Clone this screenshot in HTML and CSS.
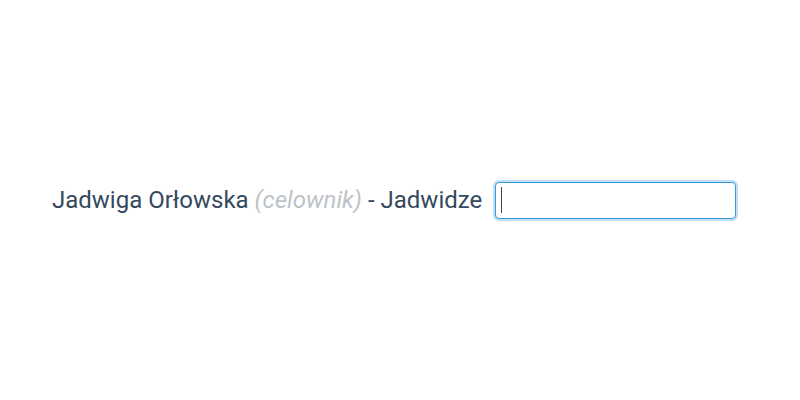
FILE: index.html
```html
<!DOCTYPE html>
<html lang="pl">
<head>
    <meta charset="UTF-8">
    <meta name="viewport" content="width=device-width, initial-scale=1.0">
    <title>Celownik</title>
    <link rel="stylesheet" href="styles.css">
</head>
<body>

    <div class="exercise">
        <label class="question" for="answer">
            Jadwiga Orłowska <span class="case">(celownik)</span> - Jadwidze
        </label>
        <span class="field">
            <input type="text" id="answer" class="answer" autofocus>
        </span>
    </div>

</body>
</html>
```

FILE: styles.css
```css
body {
    font-family: Roboto, "Noto Sans", sans-serif;
    margin: 0;
    background-color: #ffffff;
    color: #34495e;
}
.exercise {
    height: 400px;
    display: flex;
    align-items: center;
    padding-left: 52px;
    gap: 13px;
}
.question {
    font-size: 24px;
}
.case {
    color: #bdc3c7;
    font-style: italic;
}
.field {
    position: relative;
    display: flex;
}
/* fake caret, the headless browser does not draw the real one */
.field::after {
    content: "";
    position: absolute;
    left: 6px;
    top: 5px;
    width: 1px;
    height: 26px;
    background: #34495e;
}
.answer {
    width: 241px;
    height: 37px;
    box-sizing: border-box;
    border: 1px solid #3498db;
    border-radius: 4px;
    box-shadow: 0 0 0 2px #bfe0f5;
    outline: none;
    padding: 0 5px;
    font-family: Roboto, sans-serif;
    font-size: 20px;
    color: #34495e;
    caret-color: transparent;
}
```
